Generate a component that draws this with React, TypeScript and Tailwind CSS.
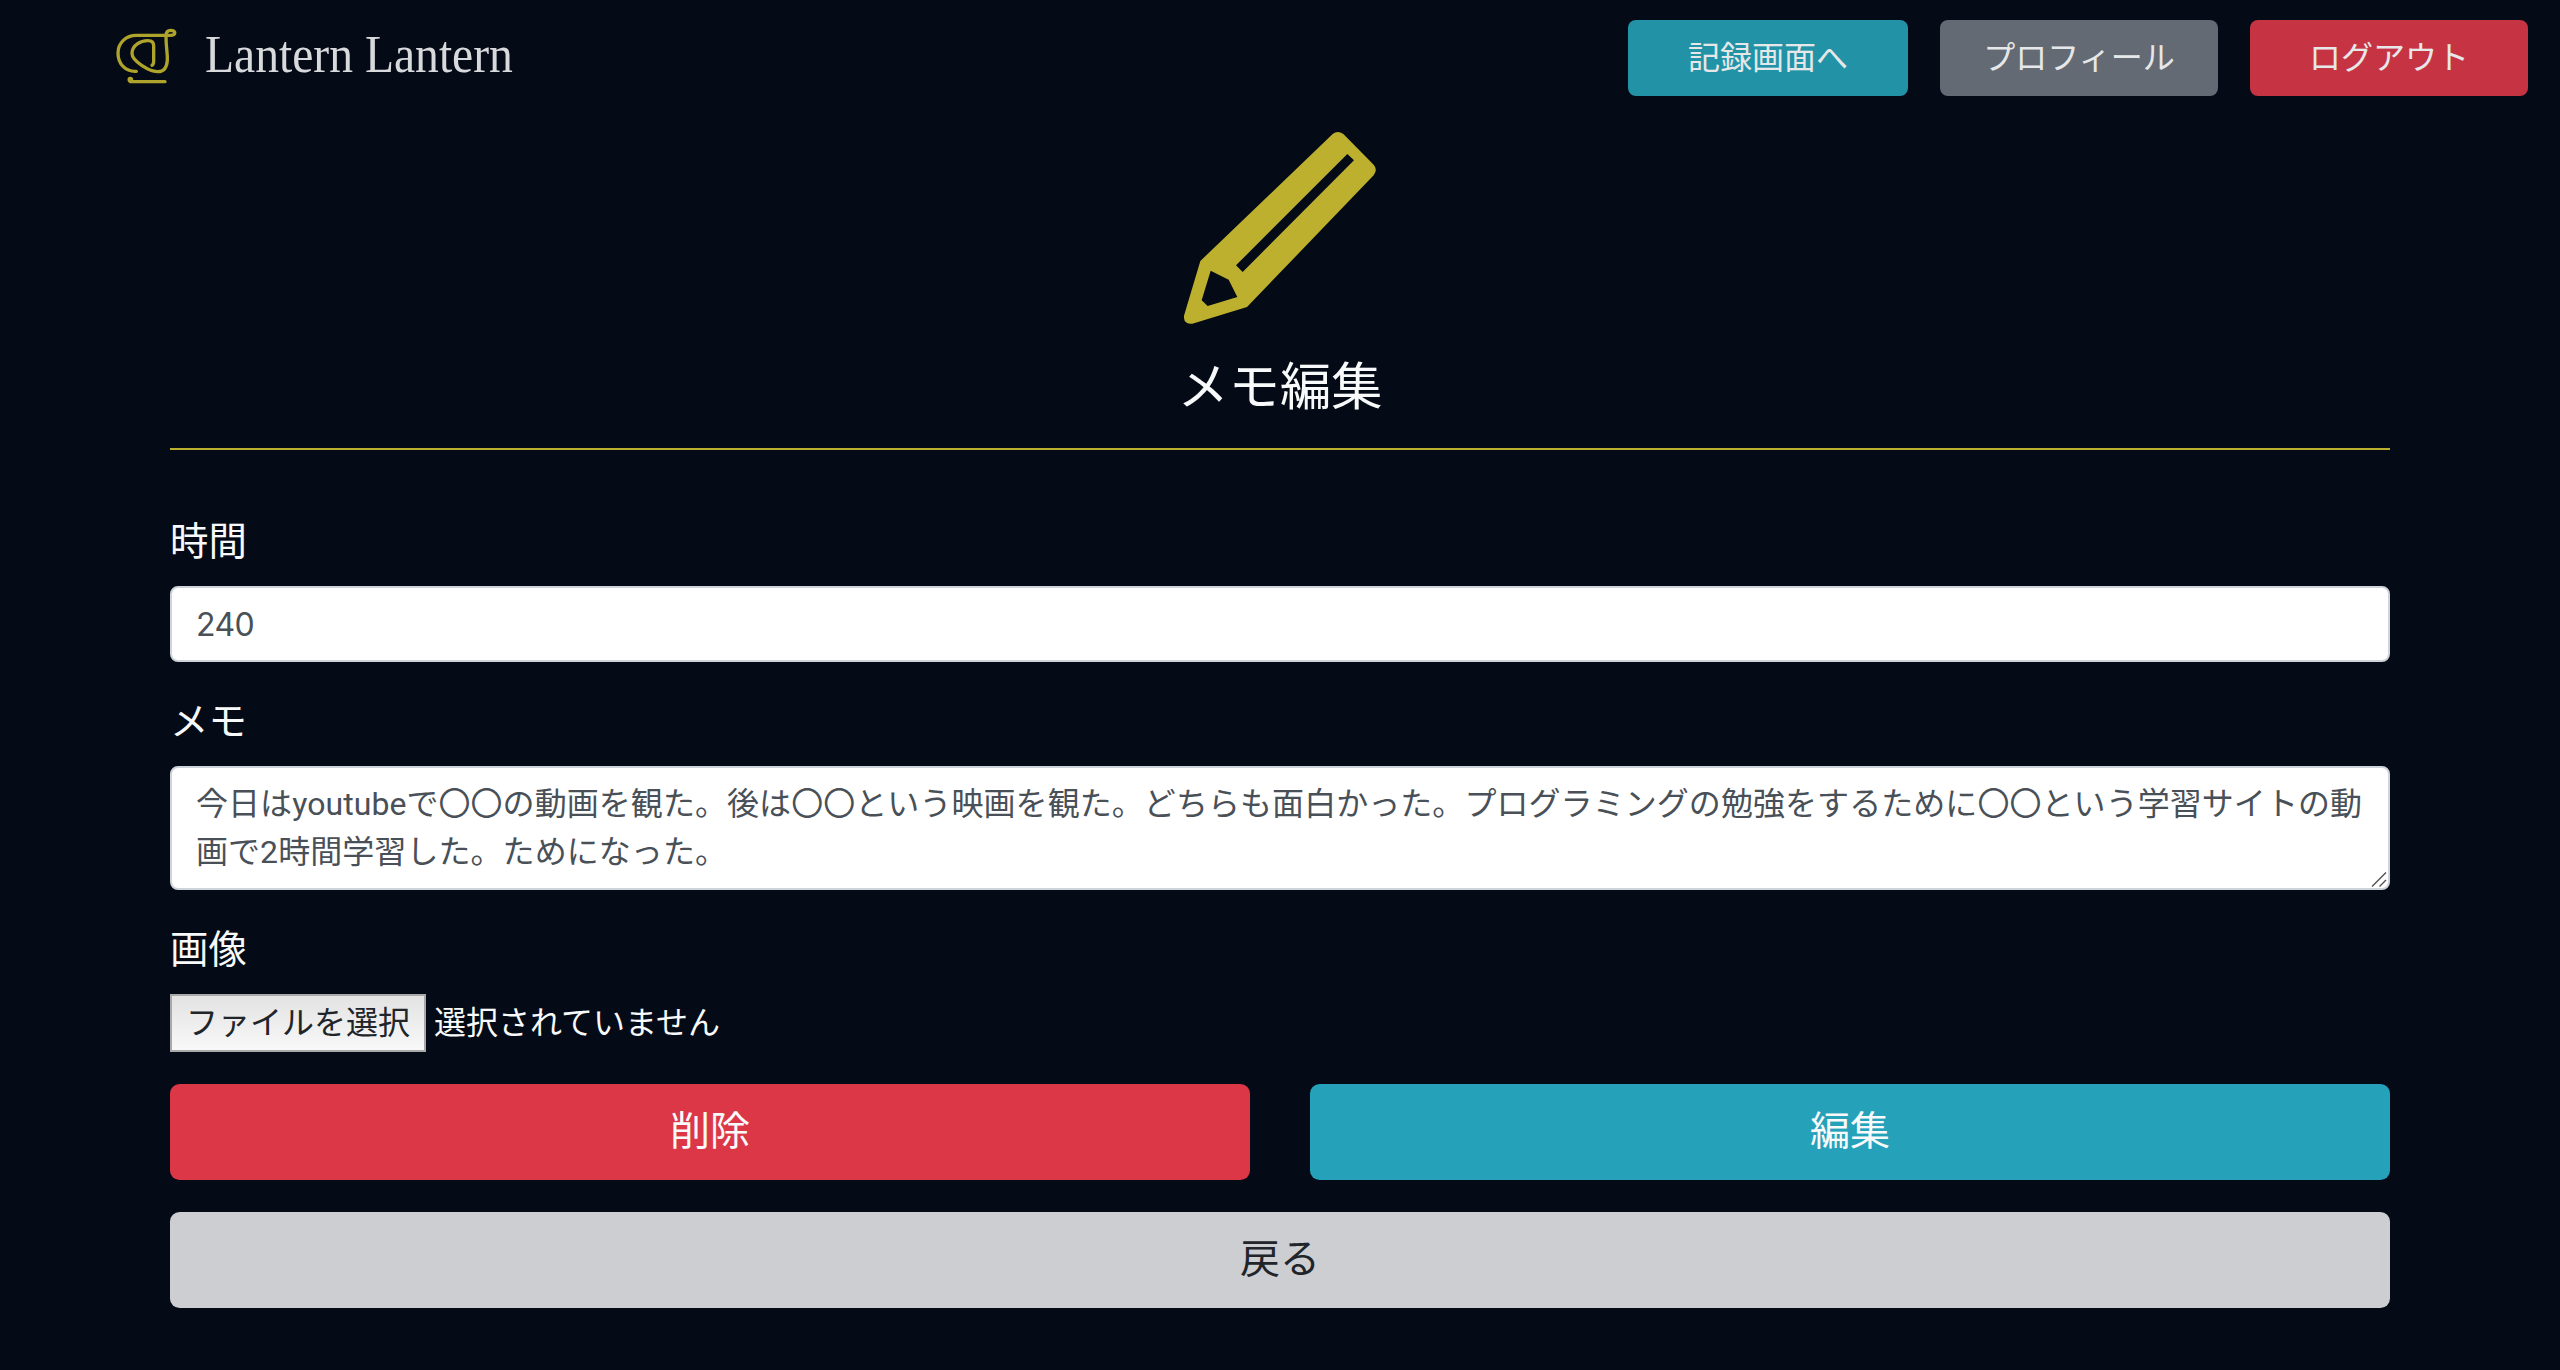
import { useState } from "react";
import clsx from "clsx";

function LogoMark() {
  return (
    <svg viewBox="0 0 200 180" className="h-[60px] w-[66.66px]" fill="none" stroke="#aea32b" strokeWidth="10" strokeLinecap="round" strokeLinejoin="round">
      <path d="M67 136C34 138 12 113 12 82C12 50 36 28 67 28H168C187 28 187 13 170 13C160 13 156 19 156 30C156 66 161 80 160 103C158 127 148 138 130 137C106 136 54 106 54 82C54 58 80 43 103 44C114 44 119 50 119 60V106C119 112 118 116 114 118" />
      <path d="M49 160V167H153" />
      <circle cx="49" cy="161" r="3.5" fill="#aea32b" />
    </svg>
  );
}

function PencilIcon() {
  return (
    <svg viewBox="0 0 576 576" className="size-48" fill="#bcb02e">
      <path
        fillRule="evenodd"
        d="M446 6Q461 -6 478 6L569 98Q582 113 569 130L189 525L25 575Q-2 577 0 551L49 387ZM490 66L156 400L176 420L510 85ZM80 416L53 505L71 522L160 495L134 443Z"
      />
    </svg>
  );
}

const navButtons = [
  { label: "記録画面へ", className: "w-[280px] bg-[#2293a7]" },
  { label: "プロフィール", className: "w-[278px] bg-[#636a73]" },
  { label: "ログアウト", className: "w-[278px] bg-[#c63444]" },
];

function Header() {
  return (
    <header className="flex h-[116px] items-start justify-between pt-5 pr-8 pl-[113.5px]">
      <a className="flex items-center gap-[25px]">
        <LogoMark />
        <span className="h-[72px] w-[310px] origin-left scale-x-[0.898] font-['Liberation_Serif'] text-[53px] leading-[69px] whitespace-nowrap text-[#d8d9dc]">
          Lantern Lantern
        </span>
      </a>
      <nav className="flex gap-8">
        {navButtons.map((button) => (
          <button key={button.label} className={clsx("h-[76px] rounded-lg text-[32px] text-[#e6e7e8]", button.className)}>
            {button.label}
          </button>
        ))}
      </nav>
    </header>
  );
}

export default function App() {
  const [minutes, setMinutes] = useState("240");
  const [memo, setMemo] = useState(
    "今日はyoutubeで〇〇の動画を観た。後は〇〇という映画を観た。どちらも面白かった。プログラミングの勉強をするために〇〇という学習サイトの動画で2時間学習した。ためになった。"
  );

  return (
    <div lang="ja" className="min-h-[1370px] bg-[#040b16] font-[Inter,'Noto_Sans_CJK_JP',sans-serif] text-[#f8f9fa]">
      <Header />
      <main className="mx-auto w-[2220px] pt-4">
        <div className="flex flex-col items-center">
          <PencilIcon />
          <h1 className="mt-6 h-[100px] text-[51.2px] leading-[76px]">メモ編集</h1>
        </div>
        <hr className="border-t-2 border-[#bcb02e]" />

        <form className="mt-16" onSubmit={(e) => e.preventDefault()}>
          <div className="mb-8">
            <label htmlFor="time" className="mb-4 block h-14 text-[38.4px] leading-[54px]">時間</label>
            <input
              id="time"
              value={minutes}
              onChange={(e) => setMinutes(e.target.value)}
              className="block h-[76px] w-full rounded-lg border-2 border-[#ced4da] bg-white px-6 text-[32px] tracking-[-0.6px] text-[#495057]"
            />
          </div>
          <div className="mb-8">
            <label htmlFor="memo" className="mb-4 block h-14 text-[38.4px] leading-[54px]">メモ</label>
            <div className="relative">
              <textarea
                id="memo"
                value={memo}
                onChange={(e) => setMemo(e.target.value)}
                className="block h-[124px] w-full resize-none overflow-hidden rounded-lg border-2 border-[#ced4da] bg-white px-6 py-3 font-[Roboto,'Noto_Sans_CJK_JP',sans-serif] text-[32px] leading-[48px] tracking-[0.06px] text-[#495057]"
              />
              <svg viewBox="0 0 16 16" className="pointer-events-none absolute right-[3px] bottom-[3px] size-4" fill="none" stroke="#505050" strokeWidth="1.4">
                <path d="M1 15.5L15 1.5M8.5 15.5L15 9" />
              </svg>
            </div>
          </div>
          <div className="mb-8">
            <label className="mb-4 block h-14 text-[38.4px] leading-[54px]">画像</label>
            <div className="flex h-[58px] items-center gap-2 text-[32px] leading-[54px]">
              <button type="button" className="h-[58px] w-64 border-2 border-[#a9a9a9] bg-linear-to-b from-[#e3e3e3] to-[#f8f8f8] text-[#212529]">
                ファイルを選択
              </button>
              <span>選択されていません</span>
            </div>
          </div>
          <div className="grid grid-cols-2 gap-x-[60px] gap-y-8 text-[40px] leading-[92px]">
            <button className="h-24 rounded-[9.6px] bg-[#dc3747] pb-0.5">削除</button>
            <button className="h-24 rounded-[9.6px] bg-[#25a2b9] pb-0.5">編集</button>
            <button type="button" className="col-span-2 h-24 rounded-[9.6px] bg-[#cdced2] pb-0.5 text-[#212529]">戻る</button>
          </div>
        </form>
      </main>
    </div>
  );
}
